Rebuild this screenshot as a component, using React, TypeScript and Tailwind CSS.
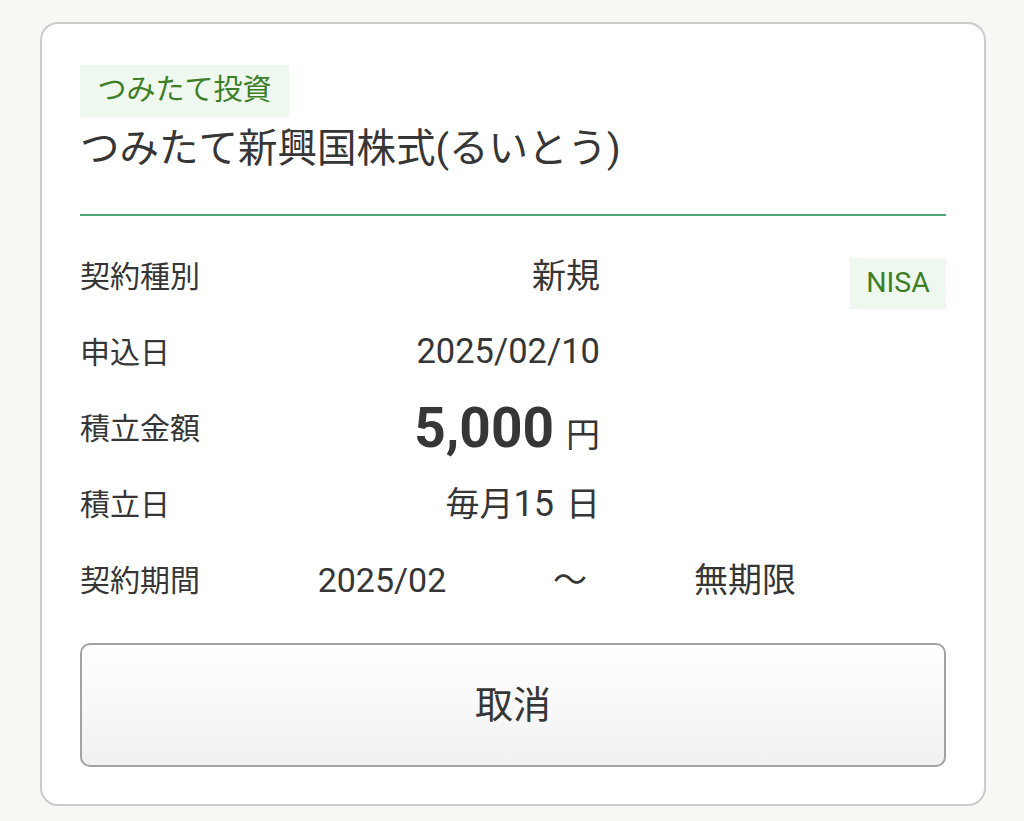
import React from "react";

const font = { fontFamily: '"Roboto", "Noto Sans CJK JP", sans-serif' };

export default function App() {
  return (
    <div
      className="min-h-[821px] w-full bg-[#f8f7f3] pl-[40px] pt-[22px] text-[#363636]"
      style={font}
    >
      <div className="w-[946px] rounded-[18px] border-2 border-[#cbcbcb] bg-white px-[38px] pb-[37px] pt-[41px]">
        <div className="flex h-[52px] w-[209px] items-center justify-center bg-[#eff8ef] text-[29px] text-[#3d7f27]">
          つみたて投資
        </div>
        <div className="h-[64px] text-[39.5px] leading-[64px]">
          つみたて新興国株式(るいとう)
        </div>
        <div className="mt-[33px] h-[2px] w-full bg-[#52a878]" />

        <div className="mt-[22px]">
          <div className="flex h-[76px] items-center">
            <div className="flex w-[520px] items-center justify-between">
              <span className="text-[30px]">契約種別</span>
              <span className="text-[34px]">新規</span>
            </div>
            <div className="ml-auto mt-[15px] flex h-[51px] w-[96px] items-center justify-center bg-[#eff8ef] text-[28.5px] text-[#3d7f27]">
              NISA
            </div>
          </div>

          <div className="flex h-[76px] items-center">
            <div className="flex w-[520px] items-center justify-between">
              <span className="text-[30px]">申込日</span>
              <span className="text-[34.5px]">2025/02/10</span>
            </div>
          </div>

          <div className="flex h-[76px] items-center">
            <div className="flex w-[520px] items-center justify-between">
              <span className="text-[30px]">積立金額</span>
              <span className="flex items-baseline">
                <span className="text-[55px] font-bold leading-none">5,000</span>
                <span className="ml-[12px] text-[34px] leading-none">円</span>
              </span>
            </div>
          </div>

          <div className="flex h-[76px] items-center">
            <div className="flex w-[520px] items-center justify-between">
              <span className="text-[30px]">積立日</span>
              <span className="text-[34px]">
                毎月<span className="text-[36px]">15</span>
                <span className="ml-[12px]">日</span>
              </span>
            </div>
          </div>

          <div className="flex h-[76px] items-center">
            <span className="w-[211px] text-[30px]">契約期間</span>
            <span className="w-[182px] text-center text-[34px]">2025/02</span>
            <span className="w-[194px] text-center text-[34px]">〜</span>
            <span className="w-[156px] text-center text-[34px]">無期限</span>
          </div>
        </div>

        <button
          type="button"
          className="mt-[25px] flex h-[124px] w-full items-center justify-center rounded-[10px] border-2 border-[#a3a3a3] bg-gradient-to-b from-white to-[#f1f1f1] text-[38px] text-[#363636]"
          style={font}
        >
          取消
        </button>
      </div>
    </div>
  );
}
